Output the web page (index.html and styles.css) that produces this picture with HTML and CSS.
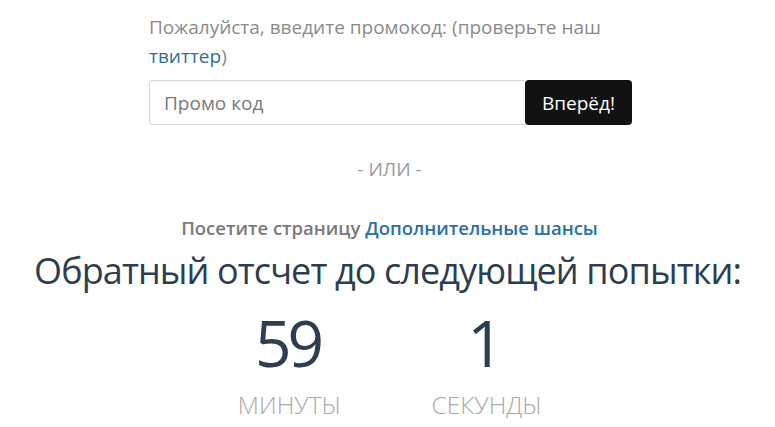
FILE: index.html
```html
<!DOCTYPE html>
<html>
<head>
<title>Промо код</title>
<meta http-equiv="Content-Type" content="text/html; charset=utf-8" />
<link rel="stylesheet" href="styles.css">
</head>
<body>
<div class="promo">
	<p class="hint">Пожалуйста, введите промокод: (проверьте наш <a href="#">твиттер</a>)</p>
	<form class="promo-form" onsubmit="return false;">
		<input type="text" class="promo-input" placeholder="Промо код">
		<button type="submit" class="promo-btn">Вперёд!</button>
	</form>
</div>
<div class="or">- ИЛИ -</div>
<div class="visit">Посетите страницу <a href="#">Дополнительные шансы</a></div>
<h1 class="countdown-title">Обратный отсчет до следующей попытки:</h1>
<div class="countdown">
	<div class="unit">
		<div class="num">59</div>
		<div class="label">МИНУТЫ</div>
	</div>
	<div class="unit">
		<div class="num">1</div>
		<div class="label">СЕКУНДЫ</div>
	</div>
</div>
</body>
</html>
```

FILE: styles.css
```css
body {
	margin: 0;
	background: #fff;
	font-family: "Open Sans", sans-serif;
	color: #2c3e50;
}
a {
	text-decoration: none;
}
.promo {
	width: 483px;
	margin: 0 auto;
	padding-top: 13px;
	position: relative;
	left: 3px;
}
.hint {
	margin: 0;
	font-size: 19px;
	line-height: 29px;
	color: #8a8a8a;
}
.hint a {
	color: #2f6f9a;
}
.promo-form {
	display: flex;
	margin-top: 9px;
	height: 45px;
}
.promo-input {
	flex: 1;
	min-width: 0;
	border: solid #d6d6d6 1px;
	border-right: none;
	border-radius: 4px 0 0 4px;
	padding: 0 14px;
	font-family: inherit;
	font-size: 19px;
	color: #555;
}
.promo-input::placeholder {
	color: #7a7a7a;
}
.promo-btn {
	width: 107px;
	border: none;
	border-radius: 4px;
	background-color: #121212;
	color: #fff;
	font-family: inherit;
	font-size: 19px;
	cursor: pointer;
}
.or {
	margin-top: 31px;
	text-align: center;
	font-size: 19px;
	color: #9a9a9a;
	position: relative;
	left: 2px;
}
.visit {
	margin-top: 33px;
	text-align: center;
	font-size: 18.5px;
	font-weight: 600;
	color: #7a7a7a;
	position: relative;
	left: 2px;
}
.visit a {
	color: #2a6fa8;
}
.countdown-title {
	margin: 6px 0 0;
	text-align: center;
	font-size: 36px;
	font-weight: 400;
	letter-spacing: -0.9px;
	line-height: 50px;
	color: #2c3e50;
}
.countdown {
	display: flex;
	justify-content: center;
	gap: 88px;
	margin-top: 12px;
}
.unit {
	width: 108px;
	text-align: center;
}
.num {
	font-size: 64px;
	font-weight: 400;
	letter-spacing: -4px;
	text-indent: -4px;
	line-height: 70px;
	color: #2c3e50;
}
.label {
	margin-top: 10px;
	font-size: 24.5px;
	font-weight: 300;
	color: #aaa;
}
```
